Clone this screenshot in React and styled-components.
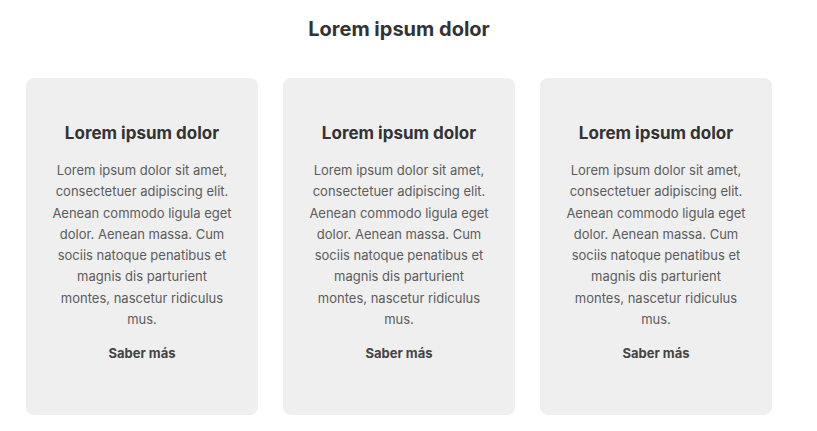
import React from 'react'
import styled, { createGlobalStyle } from 'styled-components'

const GlobalStyle = createGlobalStyle`
    body {
        margin: 0;
        background: #ffffff;
        font-family: Inter, 'Noto Sans', sans-serif;
    }
`

const cards = [1, 2, 3].map((id) => ({
    id,
    title: 'Lorem ipsum dolor',
    text: 'Lorem ipsum dolor sit amet, consectetuer adipiscing elit. Aenean commodo ligula eget dolor. Aenean massa. Cum sociis natoque penatibus et magnis dis parturient montes, nascetur ridiculus mus.',
    link: 'Saber más',
}))

function App() {
    return (
        <>
            <GlobalStyle />
            <Section>
                <Heading>Lorem ipsum dolor</Heading>
                <Grid>
                    {cards.map((card) => (
                        <Card key={card.id}>
                            <CardTitle>{card.title}</CardTitle>
                            <CardText>{card.text}</CardText>
                            <MoreLink href='#'>{card.link}</MoreLink>
                        </Card>
                    ))}
                </Grid>
            </Section>
        </>
    )
}

export default App

const Section = styled.section`
    width: 746px;
    padding: 17px 0 16px 26px;
    display: flex;
    flex-direction: column;
    align-items: center;
`

const Heading = styled.h2`
    margin: 0;
    font-size: 20px;
    line-height: 24px;
    font-weight: 700;
    color: #333333;
`

const Grid = styled.div`
    margin-top: 37px;
    width: 100%;
    display: grid;
    grid-template-columns: repeat(3, 232px);
    gap: 25px;
`

const Card = styled.div`
    height: 337px;
    box-sizing: border-box;
    padding: 45px 25px 0;
    background: #efefef;
    border-radius: 8px;
    display: flex;
    flex-direction: column;
    align-items: center;
    text-align: center;
`

const CardTitle = styled.h3`
    margin: 0;
    font-size: 17px;
    line-height: 20px;
    font-weight: 700;
    color: #333333;
`

const CardText = styled.p`
    margin: 17px 0 0;
    font-size: 13px;
    line-height: 21.3px;
    color: #5c5c5c;
`

const MoreLink = styled.a`
    margin-top: 13px;
    font-size: 13px;
    line-height: 20px;
    font-weight: 700;
    color: #444444;
    text-decoration: none;
`
